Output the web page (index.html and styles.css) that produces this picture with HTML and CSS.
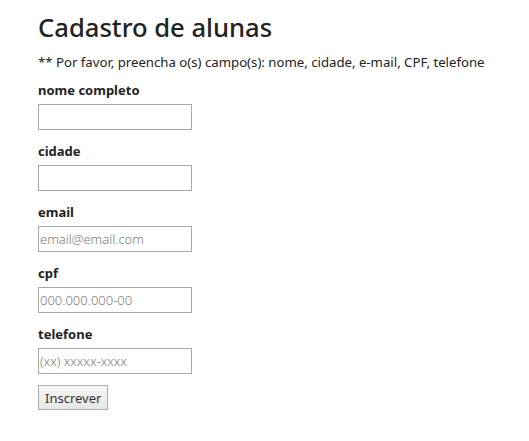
FILE: index.html
```html
<!DOCTYPE html>
<html lang="pt-BR">
<head>
<meta charset="utf-8">
<title>Cadastro de alunas</title>
<link rel="stylesheet" href="styles.css">
</head>
<body>
<main class="page">
  <h1 class="title">Cadastro de alunas</h1>
  <p class="notice">** Por favor, preencha o(s) campo(s): nome, cidade, e-mail, CPF, telefone</p>
  <form class="form">
    <div class="field">
      <label class="label" for="nome">nome completo</label>
      <input class="input" id="nome" type="text">
    </div>
    <div class="field">
      <label class="label" for="cidade">cidade</label>
      <input class="input" id="cidade" type="text">
    </div>
    <div class="field">
      <label class="label" for="email">email</label>
      <input class="input" id="email" type="text" placeholder="email@email.com">
    </div>
    <div class="field">
      <label class="label" for="cpf">cpf</label>
      <input class="input" id="cpf" type="text" placeholder="000.000.000-00">
    </div>
    <div class="field">
      <label class="label" for="tel">telefone</label>
      <input class="input" id="tel" type="text" placeholder="(xx) xxxxx-xxxx">
    </div>
    <div class="actions">
      <button class="button" type="button">Inscrever</button>
    </div>
  </form>
</main>
</body>
</html>
```

FILE: styles.css
```css
html, body {
  margin: 0;
  padding: 0;
  background: #ffffff;
}
body {
  font-family: "Noto Sans", "Open Sans", sans-serif;
  color: #222222;
}
.page {
  padding: 12px 38px 0 38px;
}
.title {
  margin: 0;
  font-size: 25.6px;
  font-weight: 500;
  line-height: 31px;
  color: #222;
}
.notice {
  margin: 10px 0 0 0;
  font-size: 13.2px;
  line-height: 18px;
}
.form {
  display: flex;
  flex-direction: column;
  gap: 12px;
  margin-top: 10px;
}
.field {
  display: flex;
  flex-direction: column;
  align-items: flex-start;
  gap: 5px;
}
.label {
  font-size: 13px;
  font-weight: 700;
  line-height: 18px;
}
.input {
  box-sizing: border-box;
  width: 154px;
  height: 26px;
  margin: 0;
  padding: 1px 1px;
  border: 1px solid #a9a9a9;
  font-family: "Noto Sans", sans-serif;
  font-size: 13px;
  color: #222;
  background: #fff;
}
.input::placeholder {
  color: #7a7a7a;
  font-weight: 300;
}
.actions {
  display: flex;
  margin-top: -1px;
}
.button {
  box-sizing: border-box;
  height: 25px;
  padding: 0 6px;
  border: 1px solid #adadad;
  border-radius: 0;
  background: linear-gradient(#f6f6f6, #e6e6e6);
  font-family: "Noto Sans", sans-serif;
  font-size: 13px;
  color: #333;
}
```
